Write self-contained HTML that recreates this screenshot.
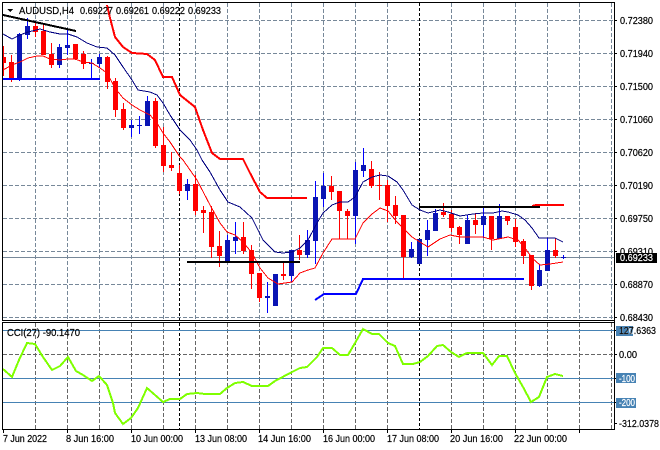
<!DOCTYPE html>
<html>
<head>
<meta charset="utf-8">
<style>
html,body{margin:0;padding:0;background:#fff;width:660px;height:450px;overflow:hidden}
svg{display:block}
text{font-family:"Liberation Sans",sans-serif;font-size:10px;fill:#000;stroke:#000;stroke-width:.2px}
text.w{fill:#fff;stroke:#fff}
.c path,.c polyline,.c line,.c rect{shape-rendering:crispEdges}
</style>
</head>
<body>
<svg width="660" height="450" viewBox="0 0 660 450" xmlns="http://www.w3.org/2000/svg">
<g class="c">
<rect width="660" height="450" fill="#fff"/>
<!-- main grid -->
<path fill="none" stroke="#778899" stroke-dasharray="4 2" d="M3 20.5H614M3 53.5H614M3 86.5H614M3 119.5H614M3 152.5H614M3 185.5H614M3 218.5H614M3 251.5H614M3 284.5H614M3 317.5H614"/>
<path fill="none" stroke="#778899" stroke-dasharray="4 2" d="M35.5 3V320M67.5 3V320M99.5 3V320M131.5 3V320M163.5 3V320M195.5 3V320M227.5 3V320M259.5 3V320M291.5 3V320M323.5 3V320M355.5 3V320M387.5 3V320M451.5 3V320M483.5 3V320M515.5 3V320M547.5 3V320M579.5 3V320M611.5 3V320"/>
<path fill="none" stroke="#000" stroke-dasharray="3 2" d="M179.5 3V320M419.5 3V320M179.5 323V429M419.5 323V429"/>
<path stroke="#778899" d="M3 257.5H614"/>
<!-- sub grid -->
<path fill="none" stroke="#666" stroke-dasharray="4 2" d="M35.5 323V429M67.5 323V429M99.5 323V429M131.5 323V429M163.5 323V429M195.5 323V429M227.5 323V429M259.5 323V429M291.5 323V429M323.5 323V429M355.5 323V429M387.5 323V429M451.5 323V429M483.5 323V429M515.5 323V429M547.5 323V429M579.5 323V429M611.5 323V429M3 354.5H614"/>
<path stroke="#4682b4" d="M3 330.5H614M3 378.5H614M3 402.5H614"/>
<!-- red wicks -->
<path fill="none" stroke="#f00" d="M3.5 46V76M11.5 55V82M35.5 21V37M43.5 23V55M51.5 43V68M75.5 44V60M83.5 51V69M107.5 56V89M115.5 78V117M123.5 103V130M155.5 98V148M163.5 127V172M171.5 152V171M179.5 165V194M195.5 175V215M203.5 206V233M211.5 206V258M219.5 231V267M243.5 222V254M251.5 245V289M259.5 273V302M283.5 261V280M299.5 235V260M331.5 176V200M339.5 191V239M347.5 209V239M371.5 161V188M379.5 172V200M387.5 180V222M395.5 196V224M403.5 215V278M443.5 203V217M451.5 210V232M459.5 226V244M475.5 213V234M491.5 216V250M507.5 216V225M515.5 219V247M523.5 239V264M531.5 255V290M555.5 238V258"/>
<!-- red bodies -->
<path fill="#f00" d="M3 57h3V63h-3zM9 62h5V79h-5zM33 26h5V32h-5zM41 31h5V55h-5zM49 54h5V65h-5zM73 44h5V59h-5zM81 54h5V64h-5zM105 57h5V82h-5zM113 81h5V110h-5zM121 109h5V128h-5zM153 101h5V146h-5zM161 145h5V166h-5zM169 165h5V168h-5zM177 173h5V191h-5zM193 184h5V211h-5zM201 210h5V213h-5zM209 212h5V247h-5zM217 246h5V256h-5zM241 237h5V251h-5zM249 250h5V274h-5zM257 273h5V298h-5zM281 274h5V276h-5zM297 250h5V255h-5zM329 186h5V192h-5zM337 191h5V211h-5zM345 211h5V216h-5zM369 169h5V186h-5zM377 185h5V186h-5zM385 185h5V206h-5zM393 205h5V216h-5zM401 215h5V257h-5zM441 212h5V215h-5zM449 214h5V228h-5zM457 227h5V235h-5zM473 220h5V225h-5zM489 216h5V239h-5zM505 216h5V221h-5zM513 227h5V242h-5zM521 241h5V256h-5zM529 255h5V286h-5zM553 250h5V256h-5z"/>
<!-- blue wicks -->
<path fill="none" stroke="#00f" d="M19.5 33V81M27.5 18V39M59.5 44V68M67.5 30V55M91.5 59V79M99.5 54V68M131.5 120V137M139.5 116V134M147.5 96V126M187.5 179V200M227.5 235V262M235.5 222V254M267.5 282V313M275.5 274V306M291.5 250V282M307.5 230V258M315.5 181V264M323.5 173V207M355.5 162V244M363.5 148V177M411.5 242V258M419.5 239V264M427.5 220V256M435.5 209V231M467.5 215V244M483.5 208V238M499.5 204V239M539.5 265V287M547.5 238V271M563.5 255V259"/>
<!-- blue bodies -->
<path fill="#0a14b4" d="M17 34h5V80h-5zM25 26h5V35h-5zM57 47h5V65h-5zM65 45h5V48h-5zM89 63h5V64h-5zM97 57h5V64h-5zM129 125h5V128h-5zM137 125h5V126h-5zM145 101h5V126h-5zM185 184h5V191h-5zM225 240h5V261h-5zM233 237h5V241h-5zM265 296h5V298h-5zM273 274h5V306h-5zM289 250h5V276h-5zM305 240h5V255h-5zM313 197h5V241h-5zM321 186h5V199h-5zM353 170h5V216h-5zM361 165h5V171h-5zM409 249h5V257h-5zM417 239h5V264h-5zM425 230h5V240h-5zM433 213h5V231h-5zM465 220h5V244h-5zM481 216h5V225h-5zM497 216h5V239h-5zM537 270h5V286h-5zM545 250h5V271h-5zM561 257h5V258h-5z"/>
<!-- navy MA -->
<polyline fill="none" stroke="#000080" points="3,34 12,39 20,35 28,32 40,29 50,32 60,34 68,34 77,37 87,43 97,47 107,48 115,55 123,67 132,80 138,90 150,92 157,95 163,103 170,115 180,130 190,140 197,150 202,160 210,172 220,190 228,202 240,207 252,218 263,240 275,252 283,253 292,252 300,248 308,240 317,223 323,213 332,205 340,202 348,202 355,197 363,182 372,177 380,175 388,176 397,182 403,190 412,205 420,210 428,213 440,210 448,212 460,216 473,214 483,213 493,213 502,211 508,212 518,215 525,220 532,228 539,238 555,238 563,242"/>
<!-- red MA -->
<polyline fill="none" stroke="#f00" points="3,70 12,65 20,62 28,58 37,56 43,56 50,59 60,60 68,59 75,59 83,62 92,63 100,68 107,73 115,88 123,98 132,105 140,110 150,115 157,123 163,133 170,142 180,157 183,160 197,180 210,205 220,223 227,232 235,235 243,242 252,253 260,268 268,278 278,284 292,282 300,273 308,270 315,268 323,253 332,239 355,239 363,223 372,214 380,208 388,211 397,222 403,228 412,237 420,242 428,247 440,239 450,235 460,237 473,237 483,237 493,240 508,237 518,240 525,248 532,258 540,265 550,264 563,262"/>
<!-- thick red -->
<polyline fill="none" stroke="#f00" stroke-width="2" points="107,5 110,18 115,37 123,47 132,53 147,54 155,60 163,77 172,77 180,95 195,107 203,130 212,153 220,159 243,159 250,173 260,192 267,198 307,198"/>
<path fill="none" stroke="#f00" stroke-width="2" d="M532 206L536 205H564"/>
<!-- black -->
<path fill="none" stroke="#000" stroke-width="2" d="M3 15L76 31M187 262H300M419 207H540"/>
<!-- thick blue -->
<path fill="none" stroke="#00f" stroke-width="2" d="M3 79H100M315 300L324 294H356L363 279H524"/>
<!-- CCI -->
<polyline fill="none" stroke="#7fff00" stroke-width="2" points="3,369 12,377 19,360 27,343 35,344 43,357 52,370 60,366 68,357 76,371 83,375 92,381 99,376 107,385 113,403 115,413 123,424 131,418 138,408 147,388 155,395 163,402 170,399 180,399 187,394 197,393 205,394 220,394 227,388 235,383 243,382 252,386 268,386 275,381 292,372 300,368 307,367 317,357 323,348 332,348 340,355 348,355 355,343 363,329 372,334 379,334 388,343 395,346 403,364 413,364 420,362 428,356 437,346 443,345 451,352 459,357 467,353 483,353 492,365 499,356 507,356 515,373 523,387 531,402 539,397 547,377 555,374 563,376"/>
<!-- frame -->
<path fill="none" stroke="#000" d="M2.5 2V321M2 2.5H615M614.5 2V430M2 320.5H615M2 322.5H615M2.5 322V430M2 429.5H615"/>
<path fill="none" stroke="#000" d="M615 20.5h2M615 53.5h2M615 86.5h2M615 119.5h2M615 152.5h2M615 185.5h2M615 218.5h2M615 251.5h2M615 284.5h2M615 317.5h2M615 354.5h2M615 330.5h2M615 378.5h2M615 402.5h2M615 423.5h2M3.5 430v3M67.5 430v3M131.5 430v3M195.5 430v3M259.5 430v3M323.5 430v3M387.5 430v3M451.5 430v3M515.5 430v3M579.5 430v3"/>
<path d="M7 9h6l-3 3z" fill="#000"/>
<rect x="616" y="326" width="17" height="10" fill="#4682b4"/>
<rect x="616" y="373" width="20" height="10" fill="#4682b4"/>
<rect x="616" y="398" width="20" height="10" fill="#4682b4"/>
</g>
<!-- header -->
<text x="19" y="14" textLength="55" lengthAdjust="spacingAndGlyphs">AUDUSD,H4</text>
<text x="80" y="14" textLength="33" lengthAdjust="spacingAndGlyphs">0.69227</text>
<text x="116" y="14" textLength="33" lengthAdjust="spacingAndGlyphs">0.69261</text>
<text x="152" y="14" textLength="33" lengthAdjust="spacingAndGlyphs">0.69222</text>
<text x="188" y="14" textLength="33" lengthAdjust="spacingAndGlyphs">0.69233</text>
<text x="7" y="336" textLength="73" lengthAdjust="spacingAndGlyphs">CCI(27) -90.1470</text>
<!-- right axis -->
<text x="620" y="24" textLength="33" lengthAdjust="spacingAndGlyphs">0.72380</text>
<text x="620" y="57" textLength="33" lengthAdjust="spacingAndGlyphs">0.71940</text>
<text x="620" y="90" textLength="33" lengthAdjust="spacingAndGlyphs">0.71500</text>
<text x="620" y="123" textLength="33" lengthAdjust="spacingAndGlyphs">0.71060</text>
<text x="620" y="156" textLength="33" lengthAdjust="spacingAndGlyphs">0.70620</text>
<text x="620" y="189" textLength="33" lengthAdjust="spacingAndGlyphs">0.70190</text>
<text x="620" y="222" textLength="33" lengthAdjust="spacingAndGlyphs">0.69750</text>
<text x="620" y="255" textLength="33" lengthAdjust="spacingAndGlyphs">0.69310</text>
<rect x="616" y="253" width="41" height="10" fill="#000" shape-rendering="crispEdges"/>
<text class="w" x="620" y="261" textLength="33" lengthAdjust="spacingAndGlyphs">0.69233</text>
<text x="620" y="288" textLength="33" lengthAdjust="spacingAndGlyphs">0.68870</text>
<text x="620" y="321" textLength="33" lengthAdjust="spacingAndGlyphs">0.68430</text>
<text class="w" x="619" y="334" textLength="15" lengthAdjust="spacingAndGlyphs">120</text>
<text x="619" y="334" textLength="37" lengthAdjust="spacingAndGlyphs">127.6363</text>
<text x="619" y="358" textLength="18" lengthAdjust="spacingAndGlyphs">0.00</text>
<text class="w" x="619" y="382" textLength="16" lengthAdjust="spacingAndGlyphs">-100</text>
<text class="w" x="619" y="406" textLength="16" lengthAdjust="spacingAndGlyphs">-200</text>
<text x="619" y="427" textLength="40" lengthAdjust="spacingAndGlyphs">-312.0378</text>
<!-- bottom axis -->
<text x="3" y="442" textLength="44" lengthAdjust="spacingAndGlyphs">7 Jun 2022</text>
<text x="66" y="442" textLength="48" lengthAdjust="spacingAndGlyphs">8 Jun 16:00</text>
<text x="131" y="442" textLength="52" lengthAdjust="spacingAndGlyphs">10 Jun 00:00</text>
<text x="195" y="442" textLength="52" lengthAdjust="spacingAndGlyphs">13 Jun 08:00</text>
<text x="258" y="442" textLength="53" lengthAdjust="spacingAndGlyphs">14 Jun 16:00</text>
<text x="323" y="442" textLength="52" lengthAdjust="spacingAndGlyphs">16 Jun 00:00</text>
<text x="387" y="442" textLength="52" lengthAdjust="spacingAndGlyphs">17 Jun 08:00</text>
<text x="450" y="442" textLength="53" lengthAdjust="spacingAndGlyphs">20 Jun 16:00</text>
<text x="514" y="442" textLength="53" lengthAdjust="spacingAndGlyphs">22 Jun 00:00</text>
</svg>
</body>
</html>
